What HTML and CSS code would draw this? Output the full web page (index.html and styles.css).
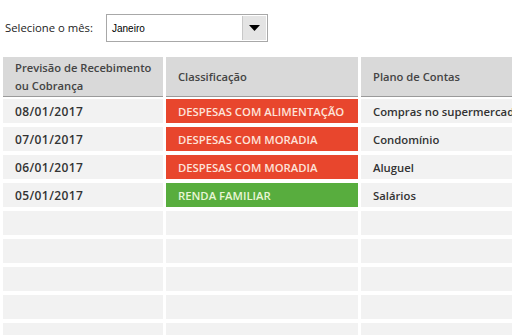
FILE: index.html
```html
<!DOCTYPE html>
<html>
<head>
<meta charset="utf-8">
<link rel="stylesheet" href="styles.css">
</head>
<body>
<div class="filter">
  <span class="filter-label">Selecione o mês:</span>
  <div class="select">
    <span class="select-value">Janeiro</span>
    <span class="select-btn"><svg width="11" height="6" viewBox="0 0 11 6"><path d="M0 0H11L5.5 6Z" fill="#000"/></svg></span>
  </div>
</div>
<div class="table">
  <div class="th">Previsão de Recebimento<br>ou Cobrança</div>
  <div class="th">Classificação</div>
  <div class="th">Plano de Contas</div>

  <div class="td date">08/01/2017</div>
  <div class="td tag red">DESPESAS COM ALIMENTAÇÃO</div>
  <div class="td">Compras no supermercado</div>

  <div class="td date">07/01/2017</div>
  <div class="td tag red">DESPESAS COM MORADIA</div>
  <div class="td">Condomínio</div>

  <div class="td date">06/01/2017</div>
  <div class="td tag red">DESPESAS COM MORADIA</div>
  <div class="td">Aluguel</div>

  <div class="td date">05/01/2017</div>
  <div class="td tag green">RENDA FAMILIAR</div>
  <div class="td">Salários</div>

  <div class="td"></div><div class="td"></div><div class="td"></div>
  <div class="td"></div><div class="td"></div><div class="td"></div>
  <div class="td"></div><div class="td"></div><div class="td"></div>
  <div class="td"></div><div class="td"></div><div class="td"></div>
  <div class="td"></div><div class="td"></div><div class="td"></div>
</div>
</body>
</html>
```

FILE: styles.css
```css
html, body {
  margin: 0;
  padding: 0;
  background: #fff;
  overflow: hidden;
  font-family: "Open Sans", "Noto Sans", sans-serif;
  color: #333;
}
body {
  width: 512px;
  height: 335px;
}
.filter {
  display: flex;
  align-items: center;
  padding: 13px 0 0 5px;
  height: 29px;
}
.filter-label {
  font-size: 11.3px;
  color: #222;
  width: 101px;
}
.select {
  display: flex;
  width: 160px;
  height: 26px;
  border: 1px solid #a8a8a8;
  background: #fff;
  box-sizing: content-box;
}
.select-value {
  flex: 1;
  font-family: "Liberation Sans", Arial, sans-serif;
  font-size: 10px;
  line-height: 28px;
  padding-left: 5px;
  color: #000;
}
.select-btn {
  width: 23px;
  background: #e4e4e4;
  border-left: 1px solid #c8c8c8;
  display: flex;
  align-items: center;
  justify-content: center;
  margin: 1px;
}
.table {
  display: grid;
  grid-template-columns: 160px 192px 200px;
  grid-auto-rows: 24px;
  grid-template-rows: 38px;
  column-gap: 3px;
  row-gap: 4px;
  margin: 15px 0 0 3px;
  width: 600px;
}
.th {
  background: #d9d9d9;
  border-bottom: 1px solid #9a9a9a;
  font-size: 11.2px;
  line-height: 18px;
  color: #444;
  font-weight: 600;
  padding-left: 12px;
  display: flex;
  align-items: center;
  margin-bottom: -2px;
}
.td {
  background: #f2f2f2;
  font-size: 11.3px;
  font-weight: 600;
  color: #333;
  padding-left: 12px;
  display: flex;
  align-items: center;
  white-space: nowrap;
  overflow: hidden;
}
.date {
  font-size: 12px;
  letter-spacing: 0.4px;
}
.tag {
  font-weight: 600;
}
.red {
  background: #e8462d;
  color: #fde3da;
}
.green {
  background: #58ad3e;
  color: #e9f6d6;
}
```
